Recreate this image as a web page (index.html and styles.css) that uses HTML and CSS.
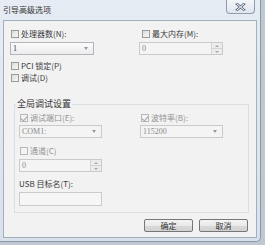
FILE: index.html
```html
<!DOCTYPE html>
<html lang="zh-CN">

<head>
    <meta charset="UTF-8">
    <title>引导高级选项</title>
    <link rel="stylesheet" href="styles.css">
</head>

<body>
    <div class="window">
        <div class="titlebar">
            <span class="title">引导高级选项</span>
            <span class="close">
                <svg width="11" height="8" viewBox="0 0 11 8">
                    <path d="M2 1 L9 7 M9 1 L2 7" stroke="#6f7c8c" stroke-width="2.6" stroke-linecap="square" fill="none"/>
                    <path d="M2 1 L9 7 M9 1 L2 7" stroke="#eef2f6" stroke-width="1" stroke-linecap="square" fill="none"/>
                </svg>
            </span>
        </div>
        <div class="client">
            <div class="cols">
                <div>
                    <label class="check"><span class="box"></span>处理器数(N):</label>
                    <div class="combo"><span>1</span><span class="arrow"></span></div>
                </div>
                <div>
                    <label class="check right"><span class="box"></span>最大内存(M):</label>
                    <div class="combo off"><span>0</span>
                        <span class="spinner"><span class="up"></span><span class="down"></span></span>
                    </div>
                </div>
            </div>
            <label class="check row-pci"><span class="box"></span>PCI 锁定(P)</label>
            <label class="check row-debug"><span class="box"></span>调试(D)</label>

            <fieldset class="group">
                <legend>全局调试设置</legend>
                <div class="group-cols">
                    <div>
                        <label class="check off"><span class="box checked"></span>调试端口(E):</label>
                        <div class="combo off"><span>COM1:</span><span class="arrow"></span></div>
                    </div>
                    <div>
                        <label class="check off"><span class="box checked"></span>波特率(B):</label>
                        <div class="combo off"><span>115200</span><span class="arrow"></span></div>
                    </div>
                </div>
                <label class="check off row-channel"><span class="box"></span>通道(C)</label>
                <div class="combo off short"><span>0</span>
                    <span class="spinner"><span class="up"></span><span class="down"></span></span>
                </div>
                <p class="usb-label">USB 目标名(T):</p>
                <div class="combo off short blank"></div>
            </fieldset>

            <div class="buttons">
                <button>确定</button>
                <button>取消</button>
            </div>
        </div>
    </div>
</body>

</html>
```

FILE: styles.css
```css
* {
    padding: 0;
    margin: 0;
    box-sizing: border-box;
}

body {
    background-color: #bfc8d2;
    width: 265px;
    height: 245px;
    overflow: hidden;
    font-family: "Noto Sans CJK SC", "DejaVu Sans", sans-serif;
    font-size: 8px;
    color: #3a3a3a;
}

.window {
    width: 261px;
    height: 242px;
    padding: 0 3px 3px 3px;
    background: linear-gradient(#e6ecf3, #d8e1eb);
    border-right: 1px solid #8a97a7;
    border-bottom: 1px solid #8a97a7;
    border-radius: 0 0 5px 0;
}

.titlebar {
    height: 20px;
    display: flex;
    justify-content: space-between;
    align-items: flex-start;
}

.title {
    line-height: 20px;
    font-size: 8px;
    color: #333;
}

.close {
    width: 29px;
    height: 14px;
    margin-right: 2px;
    display: flex;
    align-items: center;
    justify-content: center;
    border: 1px solid #8f9cad;
    border-top: none;
    border-radius: 0 0 4px 4px;
    background: linear-gradient(#f3f6f9, #dfe6ee);
}

.client {
    height: 218px;
    background-color: #f2f2f2;
    border: 1px solid #a3afbd;
    padding: 8px 8px 5px 6px;
}

.cols {
    display: grid;
    grid-template-columns: 84px 84px;
    column-gap: 45px;
}

.check {
    display: flex;
    align-items: center;
    gap: 2px;
    height: 10px;
    line-height: 10px;
    margin-left: 1px;
    white-space: nowrap;
}

.check.right {
    margin-left: 3px;
}

.box {
    width: 8px;
    height: 8px;
    border: 1px solid #9a9b9b;
    background: linear-gradient(135deg, #dcdcdc, #f7f7f7);
    position: relative;
}

.off {
    color: #939393;
}

.off .box {
    border-color: #b8b8b8;
    background: #f4f4f4;
}

.box.checked::after {
    content: "";
    position: absolute;
    left: 1px;
    top: 0;
    width: 3px;
    height: 5px;
    border-right: 1px solid #a2a2a2;
    border-bottom: 1px solid #a2a2a2;
    transform: rotate(40deg);
}

.combo {
    height: 13px;
    margin-top: 3px;
    display: flex;
    align-items: center;
    justify-content: space-between;
    padding-left: 2px;
    border: 1px solid #b0b4bb;
    background: linear-gradient(#fbfbfb, #ececec);
    font-family: "Liberation Serif", serif;
    font-size: 8px;
}

.combo.off {
    background: #f4f4f4;
    border-color: #cacaca;
    color: #8a8a8a;
}

.arrow {
    width: 0;
    height: 0;
    margin-right: 5px;
    border-left: 2.5px solid transparent;
    border-right: 2.5px solid transparent;
    border-top: 3px solid #9a9a9a;
}

.spinner {
    width: 11px;
    height: 11px;
    display: flex;
    flex-direction: column;
    border-left: 1px solid #d4d4d4;
}

.spinner span {
    flex: 1;
    display: flex;
    align-items: center;
    justify-content: center;
    background: #ececec;
}

.spinner .up {
    border-bottom: 1px solid #d4d4d4;
}

.spinner .up::after {
    content: "";
    border-left: 2px solid transparent;
    border-right: 2px solid transparent;
    border-bottom: 2px solid #a8a8a8;
}

.spinner .down::after {
    content: "";
    border-left: 2px solid transparent;
    border-right: 2px solid transparent;
    border-top: 2px solid #a8a8a8;
}

.row-pci {
    margin-top: 6px;
}

.row-debug {
    margin-top: 2px;
}

.group {
    margin: 16px -1px 0 4px;
    padding: 4px 4px 6px 4px;
    border: 1px solid #dadfe4;
    min-inline-size: 0;
}

.group legend {
    margin-left: -3px;
    padding: 0 1px;
    line-height: 10px;
    font-size: 9px;
    color: #333;
}

.group-cols {
    display: grid;
    grid-template-columns: 83px 83px;
    column-gap: 38px;
}

.group .combo {
    margin-top: 2px;
}

.row-channel {
    margin-top: 8px;
}

.group .combo.short {
    width: 83px;
    margin-top: 3px;
}

.usb-label {
    margin-top: 7px;
    line-height: 10px;
    height: 10px;
}

.combo.blank {
    height: 14px;
    margin-top: 2px;
    background: #f6f6f6;
}

.buttons {
    display: flex;
    justify-content: flex-end;
    gap: 6px;
    margin-top: 6px;
}

button {
    width: 49px;
    height: 13px;
    font-family: "Noto Sans CJK SC", sans-serif;
    font-size: 8px;
    line-height: 11px;
    color: #333;
    border: 1px solid #767676;
    border-radius: 2px;
    background: linear-gradient(#f4f4f4 0%, #e9e9e9 50%, #d9d9d9 51%, #d2d2d2 100%);
}
```
